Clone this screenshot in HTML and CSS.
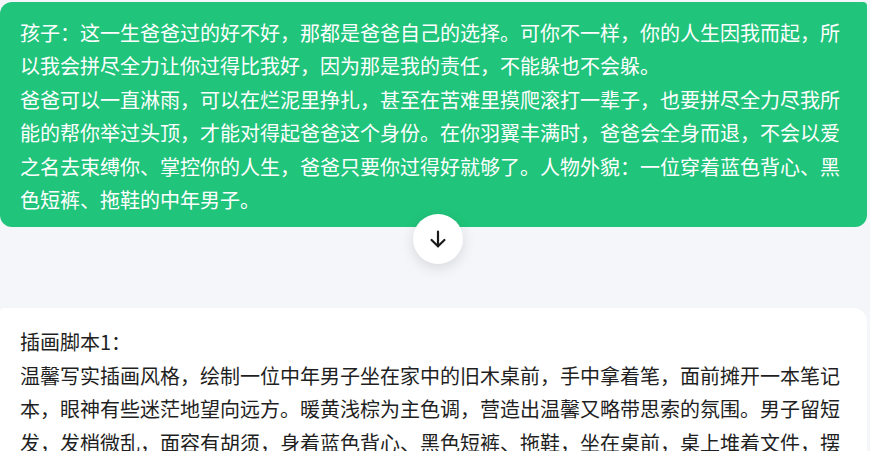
FILE: index.html
```html
<!DOCTYPE html>
<html lang="zh-CN">
<head>
    <meta charset="UTF-8">
    <meta name="viewport" content="width=device-width, initial-scale=1.0">
    <title>对话</title>
    <link rel="stylesheet" href="styles.css">
</head>
<body>
    <div class="chat">
        <!-- User message -->
        <div class="bubble-wrap">
            <div class="bubble">
                孩子：这一生爸爸过的好不好，那都是爸爸自己的选择。可你不一样，你的人生因我而起，所以我会拼尽全力让你过得比我好，因为那是我的责任，不能躲也不会躲。<br>
                爸爸可以一直淋雨，可以在烂泥里挣扎，甚至在苦难里摸爬滚打一辈子，也要拼尽全力尽我所能的帮你举过头顶，才能对得起爸爸这个身份。在你羽翼丰满时，爸爸会全身而退，不会以爱之名去束缚你、掌控你的人生，爸爸只要你过得好就够了。人物外貌：一位穿着蓝色背心、黑色短裤、拖鞋的中年男子。
            </div>
            <button class="scroll-down" title="滚动到底部">
                <svg width="22" height="22" viewBox="0 0 24 24" fill="none" stroke="#1a1a1a" stroke-width="2.4" stroke-linecap="round" stroke-linejoin="round">
                    <path d="M12 4v16"/>
                    <path d="M5 13l7 7 7-7"/>
                </svg>
            </button>
        </div>

        <!-- Assistant reply -->
        <div class="reply">
            插画脚本1：<br>
            温馨写实插画风格，绘制一位中年男子坐在家中的旧木桌前，手中拿着笔，面前摊开一本笔记本，眼神有些迷茫地望向远方。暖黄浅棕为主色调，营造出温馨又略带思索的氛围。男子留短发，发梢微乱，面容有胡须，身着蓝色背心、黑色短裤、拖鞋，坐在桌前，桌上堆着文件，摆放着一杯冒着热气的茶。
        </div>
    </div>
</body>
</html>
```

FILE: styles.css
```css
/* Page */
body {
    margin: 0;
    background-color: #f4f6fa;
    font-family: "Noto Sans CJK SC", "Noto Sans", sans-serif;
    overflow: hidden;
}

.chat {
    padding: 2px 3px 0 0;
}

/* User message bubble */
.bubble-wrap {
    position: relative;
}

.bubble {
    background-color: #21c47b;
    color: #ffffff;
    font-size: 20px;
    line-height: 33.4px;
    padding: 14px 20px 11px 20px;
    border-radius: 12px 4px 12px 12px;
}

.scroll-down {
    position: absolute;
    left: 413px;
    top: 212px;
    width: 50px;
    height: 50px;
    border: none;
    border-radius: 50%;
    background-color: #ffffff;
    box-shadow: 0 4px 14px rgba(0, 0, 0, 0.12);
    display: flex;
    align-items: center;
    justify-content: center;
    padding: 0;
    cursor: pointer;
}

/* Assistant reply card */
.reply {
    margin-top: 81px;
    background-color: #ffffff;
    color: #1f1f1f;
    font-size: 20px;
    line-height: 33.4px;
    padding: 17px 20px 20px 20px;
    border-radius: 4px 14px 0 0;
}
```
